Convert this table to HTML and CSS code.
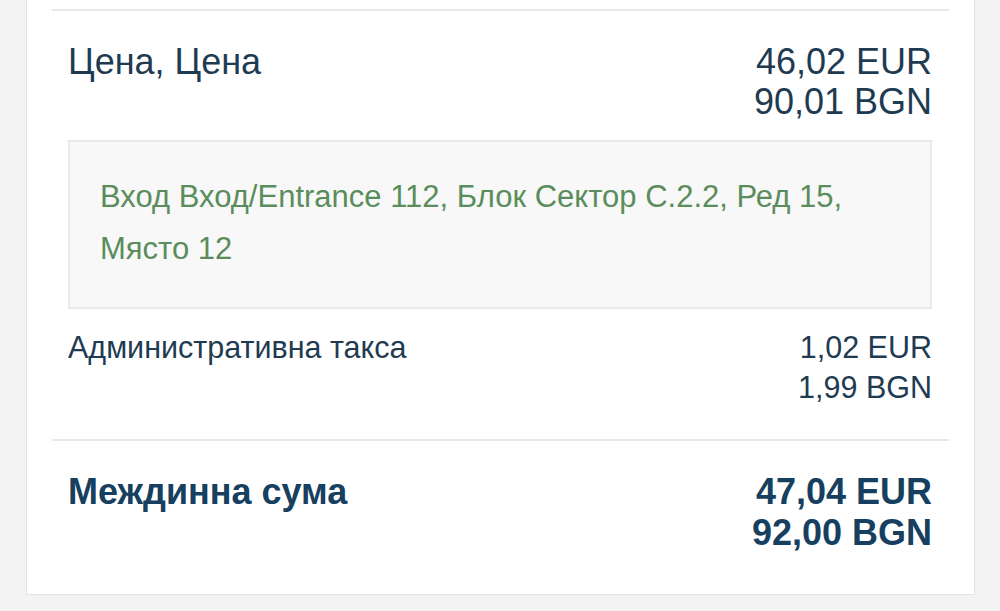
FILE: index.html
```html
<!DOCTYPE html>
<html lang="bg">
<head>
<meta charset="utf-8">
<link rel="stylesheet" href="styles.css">
</head>
<body>
<div class="card">
  <div class="divider top"></div>
  <div class="row price">
    <div class="label">Цена, Цена</div>
    <div class="amount"><div>46,02 EUR</div><div>90,01 BGN</div></div>
  </div>
  <div class="seat">
    <p>Вход Вход/Entrance 112, Блок Сектор C.2.2, Ред 15, Място 12</p>
  </div>
  <div class="row fee">
    <div class="label">Административна такса</div>
    <div class="amount"><div>1,02 EUR</div><div>1,99 BGN</div></div>
  </div>
  <div class="divider"></div>
  <div class="row subtotal">
    <div class="label">Междинна сума</div>
    <div class="amount"><div>47,04 EUR</div><div>92,00 BGN</div></div>
  </div>
</div>
</body>
</html>
```

FILE: styles.css
```css
html, body {
  margin: 0;
  padding: 0;
  background: #f3f3f3;
  font-family: "Liberation Sans", Arial, sans-serif;
  color: #1f3b52;
}

.card {
  margin: 0 25px 0 26px;
  background: #fff;
  border: 1px solid #e3e3e3;
  border-top: none;
  padding: 9px 25px 40px 25px;
  height: 595px;
  box-sizing: border-box;
}

.divider {
  height: 2px;
  background: #e8e8e8;
}

.row {
  display: flex;
  justify-content: space-between;
  align-items: flex-start;
  padding: 0 17px 0 16px;
}

.amount {
  text-align: right;
}

.price {
  padding-top: 31px;
  font-size: 36px;
  line-height: 40px;
}

.seat {
  margin: 18px 17px 0 16px;
  background: #f8f8f8;
  border: 2px solid #e9e9e9;
  padding: 29px 30px 30px 30px;
  height: 169px;
  box-sizing: border-box;
}

.seat p {
  margin: 0;
  font-size: 31px;
  line-height: 52px;
  color: #5b8d5c;
}

.fee {
  margin-top: 18px;
  margin-bottom: 32px;
  font-size: 30.5px;
  line-height: 40px;
}

.subtotal {
  padding-top: 30px;
  font-size: 36px;
  line-height: 41px;
  font-weight: bold;
  color: #163f60;
}
```
